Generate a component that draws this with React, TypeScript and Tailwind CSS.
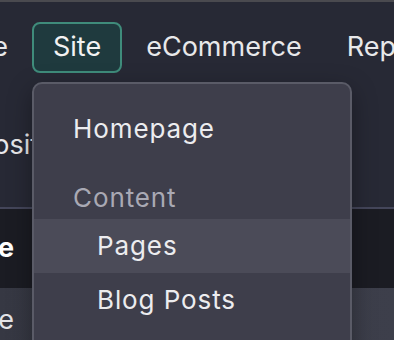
const NAV_ITEMS = ["Site", "eCommerce", "Reports"];

const MENU = [
  { label: "Homepage", kind: "item" },
  { label: "Content", kind: "heading" },
  { label: "Pages", kind: "sub", active: true },
  { label: "Blog Posts", kind: "sub" },
  { label: "Media", kind: "sub" },
];

export default function App() {
  return (
    <div className="relative h-[340px] w-[394px] overflow-hidden bg-[#272935] font-['Inter',sans-serif] text-[#e8e8ea]">
      <div className="h-[2px] bg-[#4a4a4f]" />

      {/* Top nav */}
      <nav className="relative flex gap-[3px] pt-[20px] text-[27px] whitespace-nowrap">
        <div className="flex w-[29px] shrink-0 justify-end">
          <span className="flex h-[51px] items-center border-2 border-transparent px-[19px]">Home</span>
        </div>
        {NAV_ITEMS.map((item) => (
          <div key={item} className="relative shrink-0">
            <span
              className={
                item === "Site"
                  ? "flex h-[51px] items-center rounded-[8px] border-2 border-[#3f8c7b] bg-[#1f3a3e] px-[19px] text-[#f2f2f2]"
                  : "flex h-[51px] items-center border-2 border-transparent px-[19px]"
              }>
              {item}
            </span>

            {item === "Site" && (
              <div className="absolute left-0 top-[60px] z-10 h-[300px] w-[320px] rounded-[10px] border-2 border-[#5a5b67] bg-[#3e3e4b] pt-[18px] text-[26px] leading-[26px] tracking-[0.9px] shadow-[0_8px_24px_rgba(0,0,0,0.35)]">
                {MENU.map((m) =>
                  m.kind === "heading" ? (
                    <div key={m.label} className="px-[39px] pb-[8px] pt-[29px] text-[#a9a9b4]">
                      {m.label}
                    </div>
                  ) : (
                    <div
                      key={m.label}
                      className={
                        (m.kind === "item" ? "px-[39px]" : "px-[63px]") +
                        " flex h-[54px] items-center text-[#ececef]" +
                        (m.active ? " bg-[#4b4b58]" : "")
                      }>
                      {m.label}
                    </div>
                  )
                )}
              </div>
            )}
          </div>
        ))}
      </nav>

      {/* Second nav line */}
      <div className="mt-[47px] flex h-[51px] items-center whitespace-nowrap text-[27px]">
        <span className="-ml-[56px]">Repositories</span>
      </div>

      {/* Table */}
      <div className="mt-[36px] h-[2px] bg-[#44465a]" />
      <div className="flex h-[79px] items-center bg-[#1b1c23] text-[27px] font-bold text-white">
        <div className="flex w-[14px] shrink-0 justify-end whitespace-nowrap">Name</div>
      </div>
      <div className="flex h-[60px] items-center bg-gradient-to-r from-[#363843] to-[#3d3f4b] pt-[4px] text-[27px] text-[#e4e4e8]">
        <div className="flex w-[14px] shrink-0 justify-end whitespace-nowrap">Home</div>
      </div>
    </div>
  );
}
